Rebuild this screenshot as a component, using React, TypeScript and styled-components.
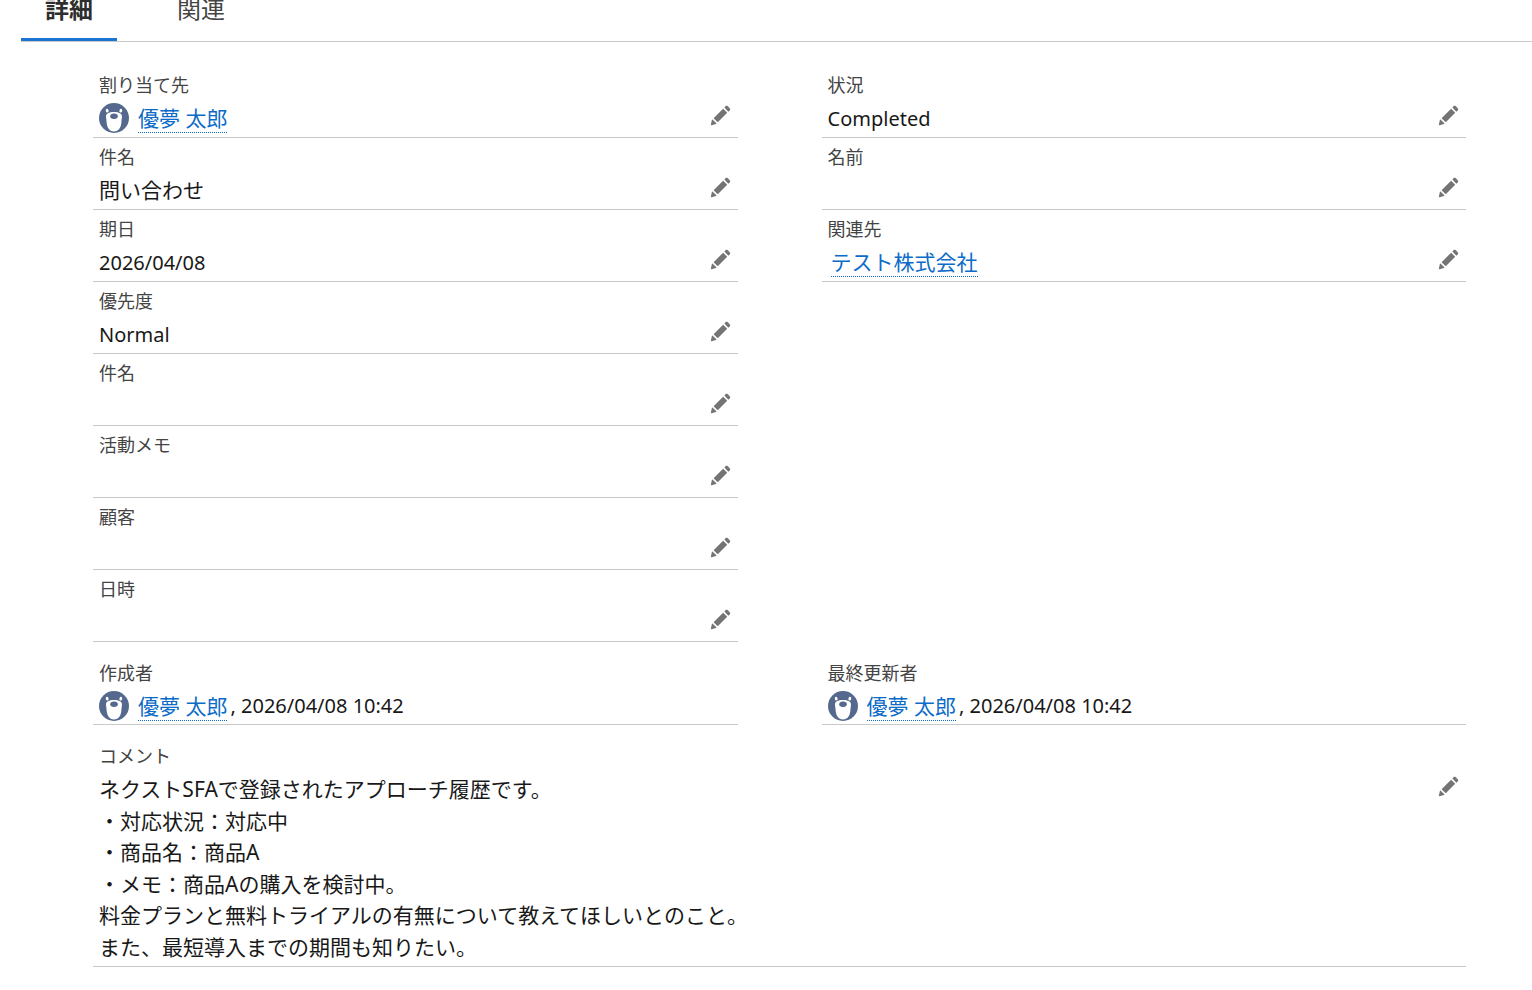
import React from "react";
import styled, { createGlobalStyle } from "styled-components";

const GlobalStyle = createGlobalStyle`
  *, *::before, *::after { box-sizing: border-box; }
  body {
    margin: 0;
    background: #fff;
    color: #181818;
    font-family: "Noto Sans", "Noto Sans CJK JP", sans-serif;
    font-size: 21px;
    line-height: 1.5;
  }
`;

const Page = styled.div`
  padding-left: 21px;
`;

const TabBar = styled.div`
  display: flex;
  gap: 36px;
  height: 42px;
  border-bottom: 1px solid #c9c9c9;
`;

const Tab = styled.button<{ $active?: boolean }>`
  height: 41px;
  padding: 0 24px 22px;
  border: 0;
  border-bottom: 3px solid ${(p) => (p.$active ? "#1b74d2" : "transparent")};
  background: none;
  color: ${(p) => (p.$active ? "#2e2e2e" : "#444")};
  font-family: "Noto Sans CJK JP", sans-serif;
  font-size: 24px;
  font-weight: ${(p) => (p.$active ? 700 : 400)};
  line-height: 16px;
  cursor: pointer;
`;

const Panel = styled.main`
  padding: 24px 66px 24px 72px;
`;

const Section = styled.section<{ $single?: boolean }>`
  display: grid;
  grid-template-columns: ${(p) => (p.$single ? "1fr" : "1fr 1fr")};
  column-gap: 84px;
  align-items: start;

  & + & {
    margin-top: 12px;
  }
`;

const FieldList = styled.dl`
  margin: 0;
`;

const Label = styled.dt`
  margin-bottom: 5px;
  color: #444;
  font-family: "Noto Sans CJK JP", sans-serif;
  font-size: 18px;
  line-height: 27px;
`;

const FieldRow = styled.div<{ $readOnly?: boolean; $multiline?: boolean }>`
  padding: 5px 6px ${(p) => (p.$multiline ? 3 : 2)}px;
  border-bottom: 1px solid #c9c9c9;

  ${Label} {
    margin-bottom: ${(p) => (p.$readOnly ? 4 : 5)}px;
  }
`;

const ValueLine = styled.dd`
  display: flex;
  align-items: flex-start;
  justify-content: space-between;
  min-height: 32px;
  margin: 0;
`;

const Value = styled.div`
  display: flex;
  align-items: center;
`;

const Latin = styled.span`
  font-size: 20px;
  line-height: 32px;
`;

const Timestamp = styled(Latin)`
  margin-left: 3px;
`;

const Comment = styled.p`
  margin: 0;
  white-space: pre-line;
`;

const RecordLink = styled.a`
  border-bottom: 1px dotted #0b6bc7;
  color: #0b6bc7;
  line-height: 28px;
  text-decoration: none;
`;

const Lookup = styled.span`
  padding-left: 3px;
`;

const Avatar = styled.svg`
  flex: none;
  width: 30px;
  height: 30px;
  margin-right: 9px;
`;

const EditButton = styled.button`
  flex: none;
  display: flex;
  padding: 2px 1px;
  border: 0;
  background: none;
  color: #747474;
  cursor: pointer;

  svg {
    width: 21px;
    height: 21px;
    fill: currentColor;
  }
`;

function BearAvatar() {
  return (
    <Avatar viewBox="0 0 30 30" aria-hidden="true">
      <circle cx="15" cy="15" r="15" fill="#54698d" />
      <ellipse cx="8.200" cy="7.700" rx="1.400" ry="1.900" fill="#fff" transform="rotate(-12 8.200 7.700)" />
      <ellipse cx="21.800" cy="7.700" rx="1.400" ry="1.900" fill="#fff" transform="rotate(12 21.800 7.700)" />
      <path
        d="M15 9c5 0 8 1.500 8 4.500 0 1.800-.5 3-.6 5.500-.2 5.500-2.900 9.500-7.400 9.500s-7.200-4-7.400-9.500C7.500 16.500 7 15.300 7 13.500 7 10.500 10 9 15 9z"
        fill="#fff"
      />
      <ellipse cx="15" cy="13.300" rx="3.800" ry="2.700" fill="#54698d" />
    </Avatar>
  );
}

function Edit({ label }: { label: string }) {
  return (
    <EditButton type="button" aria-label={`${label} の編集`}>
      <svg viewBox="0 0 52 52" aria-hidden="true">
        <path d="M9.500 33.400l8.900 8.900c.4.4 1 .4 1.400 0L42 20c.4-.4.4-1 0-1.400l-8.800-8.800c-.4-.4-1-.4-1.400 0L9.500 32.100c-.4.4-.4 1 0 1.300zM36.100 5.700c-.4.4-.4 1 0 1.400l8.800 8.800c.4.4 1 .4 1.400 0l2.500-2.500c1.600-1.500 1.600-3.900 0-5.500l-4.700-4.700c-1.600-1.600-4.100-1.600-5.700 0l-2.300 2.500zM2.100 48.200c-.2 1 .7 1.900 1.700 1.700l10.900-2.600c.4-.1.7-.3.9-.5l.2-.2c.2-.2.3-.9-.1-1.300l-9-9c-.4-.4-1.100-.3-1.300-.1l-.2.2c-.3.3-.4.6-.5.9L2.100 48.200z" />
      </svg>
    </EditButton>
  );
}

interface FieldProps {
  label: string;
  readOnly?: boolean;
  multiline?: boolean;
  children?: React.ReactNode;
}

function Field({ label, readOnly, multiline, children }: FieldProps) {
  return (
    <FieldRow $readOnly={readOnly} $multiline={multiline}>
      <Label>{label}</Label>
      <ValueLine>
        <Value>{children}</Value>
        {!readOnly && <Edit label={label} />}
      </ValueLine>
    </FieldRow>
  );
}

function User() {
  return (
    <>
      <BearAvatar />
      <RecordLink href="#user">優夢 太郎</RecordLink>
    </>
  );
}

const comment = `ネクストSFAで登録されたアプローチ履歴です。
・対応状況：対応中
・商品名：商品A
・メモ：商品Aの購入を検討中。
料金プランと無料トライアルの有無について教えてほしいとのこと。
また、最短導入までの期間も知りたい。`;

export default function App() {
  return (
    <Page>
      <GlobalStyle />
      <TabBar role="tablist">
        <Tab type="button" role="tab" aria-selected="true" $active>
          詳細
        </Tab>
        <Tab type="button" role="tab" aria-selected="false">
          関連
        </Tab>
      </TabBar>
      <Panel role="tabpanel">
        <Section>
          <FieldList>
            <Field label="割り当て先">
              <User />
            </Field>
            <Field label="件名">問い合わせ</Field>
            <Field label="期日">
              <Latin>2026/04/08</Latin>
            </Field>
            <Field label="優先度">
              <Latin>Normal</Latin>
            </Field>
            <Field label="件名" />
            <Field label="活動メモ" />
            <Field label="顧客" />
            <Field label="日時" />
          </FieldList>
          <FieldList>
            <Field label="状況">
              <Latin>Completed</Latin>
            </Field>
            <Field label="名前" />
            <Field label="関連先">
              <Lookup>
                <RecordLink href="#account">テスト株式会社</RecordLink>
              </Lookup>
            </Field>
          </FieldList>
        </Section>
        <Section>
          <FieldList>
            <Field label="作成者" readOnly>
              <User />
              <Timestamp>, 2026/04/08 10:42</Timestamp>
            </Field>
          </FieldList>
          <FieldList>
            <Field label="最終更新者" readOnly>
              <User />
              <Timestamp>, 2026/04/08 10:42</Timestamp>
            </Field>
          </FieldList>
        </Section>
        <Section $single>
          <FieldList>
            <Field label="コメント" multiline>
              <Comment>{comment}</Comment>
            </Field>
          </FieldList>
        </Section>
      </Panel>
    </Page>
  );
}
